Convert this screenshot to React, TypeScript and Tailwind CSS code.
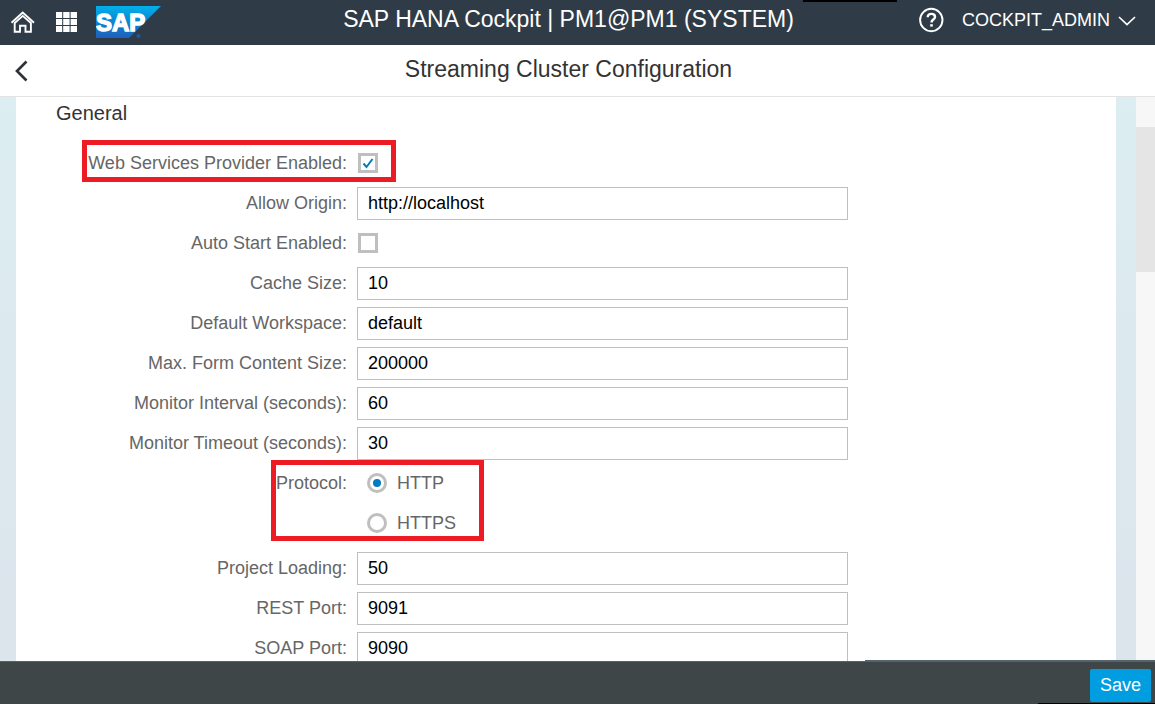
import { useState } from "react";

type Field =
  | { kind: "text"; id: string; label: string; value: string }
  | { kind: "check"; id: string; label: string; checked: boolean; highlighted?: boolean };

const beforeProtocol: Field[] = [
  { kind: "check", id: "wsp", label: "Web Services Provider Enabled:", checked: true, highlighted: true },
  { kind: "text", id: "origin", label: "Allow Origin:", value: "http://localhost" },
  { kind: "check", id: "autostart", label: "Auto Start Enabled:", checked: false },
  { kind: "text", id: "cache", label: "Cache Size:", value: "10" },
  { kind: "text", id: "workspace", label: "Default Workspace:", value: "default" },
  { kind: "text", id: "form", label: "Max. Form Content Size:", value: "200000" },
  { kind: "text", id: "interval", label: "Monitor Interval (seconds):", value: "60" },
  { kind: "text", id: "timeout", label: "Monitor Timeout (seconds):", value: "30" },
];

const afterProtocol: Field[] = [
  { kind: "text", id: "loading", label: "Project Loading:", value: "50" },
  { kind: "text", id: "rest", label: "REST Port:", value: "9091" },
  { kind: "text", id: "soap", label: "SOAP Port:", value: "9090" },
];

const rowClass = "grid h-10 shrink-0 grid-cols-[341fr_491fr_268fr] items-center";

function Row({ field }: { field: Field }) {
  return (
    <div className={rowClass}>
      <div className="relative flex h-full items-center justify-end pr-[10px]">
        <label htmlFor={field.id} className="whitespace-nowrap">
          {field.label}
        </label>
        {field.kind === "check" && field.highlighted && (
          <span className="pointer-events-none absolute -top-[3px] -right-[39px] h-[42px] w-[314px] border-5 border-[#ed1c24]" />
        )}
      </div>
      {field.kind === "text" ? (
        <input
          id={field.id}
          type="text"
          defaultValue={field.value}
          className="h-[33px] w-full border border-[#bfbfbf] bg-white px-[10px] text-black outline-none"
        />
      ) : (
        <span className="relative ml-px flex size-5">
          <input
            id={field.id}
            type="checkbox"
            defaultChecked={field.checked}
            className="peer size-5 appearance-none border-3 border-[#bfbfbf] bg-white"
          />
          <svg
            viewBox="0 0 20 20"
            className="pointer-events-none absolute inset-0 hidden size-5 peer-checked:block"
            fill="none"
            stroke="#007cc0"
            strokeWidth="2"
          >
            <path d="M5.5 10.5 L8.5 14 L14.5 6" />
          </svg>
        </span>
      )}
    </div>
  );
}

function SapLogo() {
  return (
    <svg viewBox="0 0 65 32" className="mb-[2px] h-8 w-[65px]" role="img" aria-label="SAP">
      <defs>
        <linearGradient id="sap" x1="0" y1="0" x2="0" y2="1">
          <stop offset="0" stopColor="#00b1eb" />
          <stop offset="0.4" stopColor="#0a8dd6" />
          <stop offset="1" stopColor="#1f5fbb" />
        </linearGradient>
      </defs>
      <path d="M0 0 H65 L33 32 H0 Z" fill="url(#sap)" />
      <text
        x="0"
        y="25"
        fontFamily="Liberation Sans, Arial, sans-serif"
        fontWeight="700"
        fontSize="24"
        fill="#fff"
        stroke="#fff"
        strokeWidth="1.4"
      >
        SAP
      </text>
      <circle cx="42.5" cy="30" r="1.6" fill="#1f5a9c" stroke="#1f5a9c" />
    </svg>
  );
}

export default function App() {
  const [protocol, setProtocol] = useState("HTTP");
  return (
    <div className="flex h-screen flex-col overflow-hidden bg-white font-['Liberation_Sans',Arial,sans-serif] text-lg text-[#666666]">
      <header className="relative grid h-[45px] shrink-0 grid-cols-[1fr_auto_1fr] items-center bg-[#2f3c48] text-white">
        <div className="flex items-center pl-[10px]">
          <button aria-label="Home" className="mr-5 mb-[2px]">
            <svg viewBox="0 0 26 24" className="h-6 w-[26px]" fill="none" stroke="#fff" strokeWidth="1.9">
              <path d="M1.5 12.8 L12.7 2.5 L24 12.8" />
              <path d="M4.7 13 V21.7 H10 V15.7 H15.5 V21.7 H20.9 V13 L12.7 5.9 Z" />
            </svg>
          </button>
          <button aria-label="Apps" className="mr-[19px] mb-[2px]">
            <svg viewBox="0 0 21 20" className="h-5 w-[21px]" fill="#fff">
              <path d="M0 0h6.2v6H0z M7.2 0h6.4v6H7.2z M14.6 0H21v6h-6.4z" />
              <path d="M0 7h6.2v6H0z M7.2 7h6.4v6H7.2z M14.6 7H21v6h-6.4z" />
              <path d="M0 14h6.2v6H0z M7.2 14h6.4v6H7.2z M14.6 14H21v6h-6.4z" />
            </svg>
          </button>
          <SapLogo />
        </div>
        <h1 className="pr-[18px] pb-[7px] text-[23px] leading-7 whitespace-nowrap">SAP HANA Cockpit | PM1@PM1 (SYSTEM)</h1>
        <div className="flex items-center justify-end pr-[19px] pb-[5px]">
          <button aria-label="Help" className="mr-[18px]">
            <svg viewBox="0 0 26 26" className="size-[26px]" fill="none" stroke="#fff">
              <circle cx="13.3" cy="13" r="11.2" strokeWidth="1.9" />
              <path d="M9.7 10.3 C9.7 7.9 11.3 6.9 13.4 6.9 C15.5 6.9 17 8 17 9.9 C17 12.5 13.5 12.6 13.5 15.4" strokeWidth="2.4" />
              <path d="M13.5 17.2 V19.6" strokeWidth="2.6" />
            </svg>
          </button>
          <button className="flex items-center gap-2 leading-6">
            COCKPIT_ADMIN
            <svg viewBox="0 0 18 10" className="mt-[2px] h-[10px] w-[18px]" fill="none" stroke="#fff" strokeWidth="1.7">
              <path d="M1 1 L9 8.6 L17 1" />
            </svg>
          </button>
        </div>
        <span className="absolute top-0 right-[258px] h-[2px] w-[94px] bg-black" />
      </header>

      <div className="grid h-[52px] shrink-0 grid-cols-[1fr_auto_1fr] items-center border-b border-[#e3e3e3] bg-white text-[#333333]">
        <button aria-label="Back" className="ml-[14px] w-4">
          <svg viewBox="0 0 16 22" className="h-[22px] w-4" fill="none" stroke="#2f3338" strokeWidth="2.7">
            <path d="M12.5 1.5 L3 11 L12.5 20.5" />
          </svg>
        </button>
        <h2 className="pr-[18px] pb-1 text-[23px] leading-7 whitespace-nowrap">Streaming Cluster Configuration</h2>
      </div>

      <main className="flex min-h-0 flex-1 overflow-hidden bg-linear-to-b from-[#dceef2] to-[#dce4ec]">
        <form id="config" className="ml-4 flex min-w-0 flex-1 flex-col overflow-hidden bg-white">
          <h3 className="mb-4 shrink-0 pt-[3px] pl-10 text-xl leading-[27px] text-[#333333]">General</h3>
          <div className="flex flex-col">
            {beforeProtocol.map((f) => (
              <Row key={f.id} field={f} />
            ))}
            <div role="radiogroup" aria-labelledby="protocol" className="mb-[5px]">
              {["HTTP", "HTTPS"].map((name, i) => (
                <div key={name} className={rowClass}>
                  <div className="relative flex h-full items-center justify-end pr-[10px]">
                    {i === 0 && (
                      <>
                        <span id="protocol">Protocol:</span>
                        <span className="pointer-events-none absolute -top-[3px] -right-[127px] z-10 h-[81px] w-[213px] border-5 border-[#ed1c24]" />
                      </>
                    )}
                  </div>
                  <label className="ml-[10px] flex items-center gap-[10px]">
                    <input
                      type="radio"
                      name="protocol"
                      value={name}
                      checked={protocol === name}
                      onChange={() => setProtocol(name)}
                      className="flex size-5 appearance-none items-center justify-center rounded-full border-3 border-[#bfbfbf] bg-white before:size-2 before:rounded-full checked:before:bg-[#007cc0]"
                    />
                    {name}
                  </label>
                </div>
              ))}
            </div>
            {afterProtocol.map((f) => (
              <Row key={f.id} field={f} />
            ))}
          </div>
        </form>
        <div className="ml-5 w-[19px] bg-[#f7f7f7] pt-[30px]">
          <div className="h-[145px] bg-[#e5e5e5]" />
        </div>
      </main>

      <footer className="relative flex h-[43px] shrink-0 items-start justify-end border-t border-[#55646b] bg-[#3f4648] pt-[7px] pr-1">
        <button
          type="submit"
          form="config"
          className="h-[33px] rounded-[2px] bg-[#009de0] px-[10px] text-lg leading-[33px] text-white"
        >
          Save
        </button>
        <span className="absolute -top-[2px] right-0 h-[2px] w-[290px] bg-[#55646b]" />
        <span className="absolute right-0 bottom-0 h-px w-[117px] bg-black" />
      </footer>
    </div>
  );
}
